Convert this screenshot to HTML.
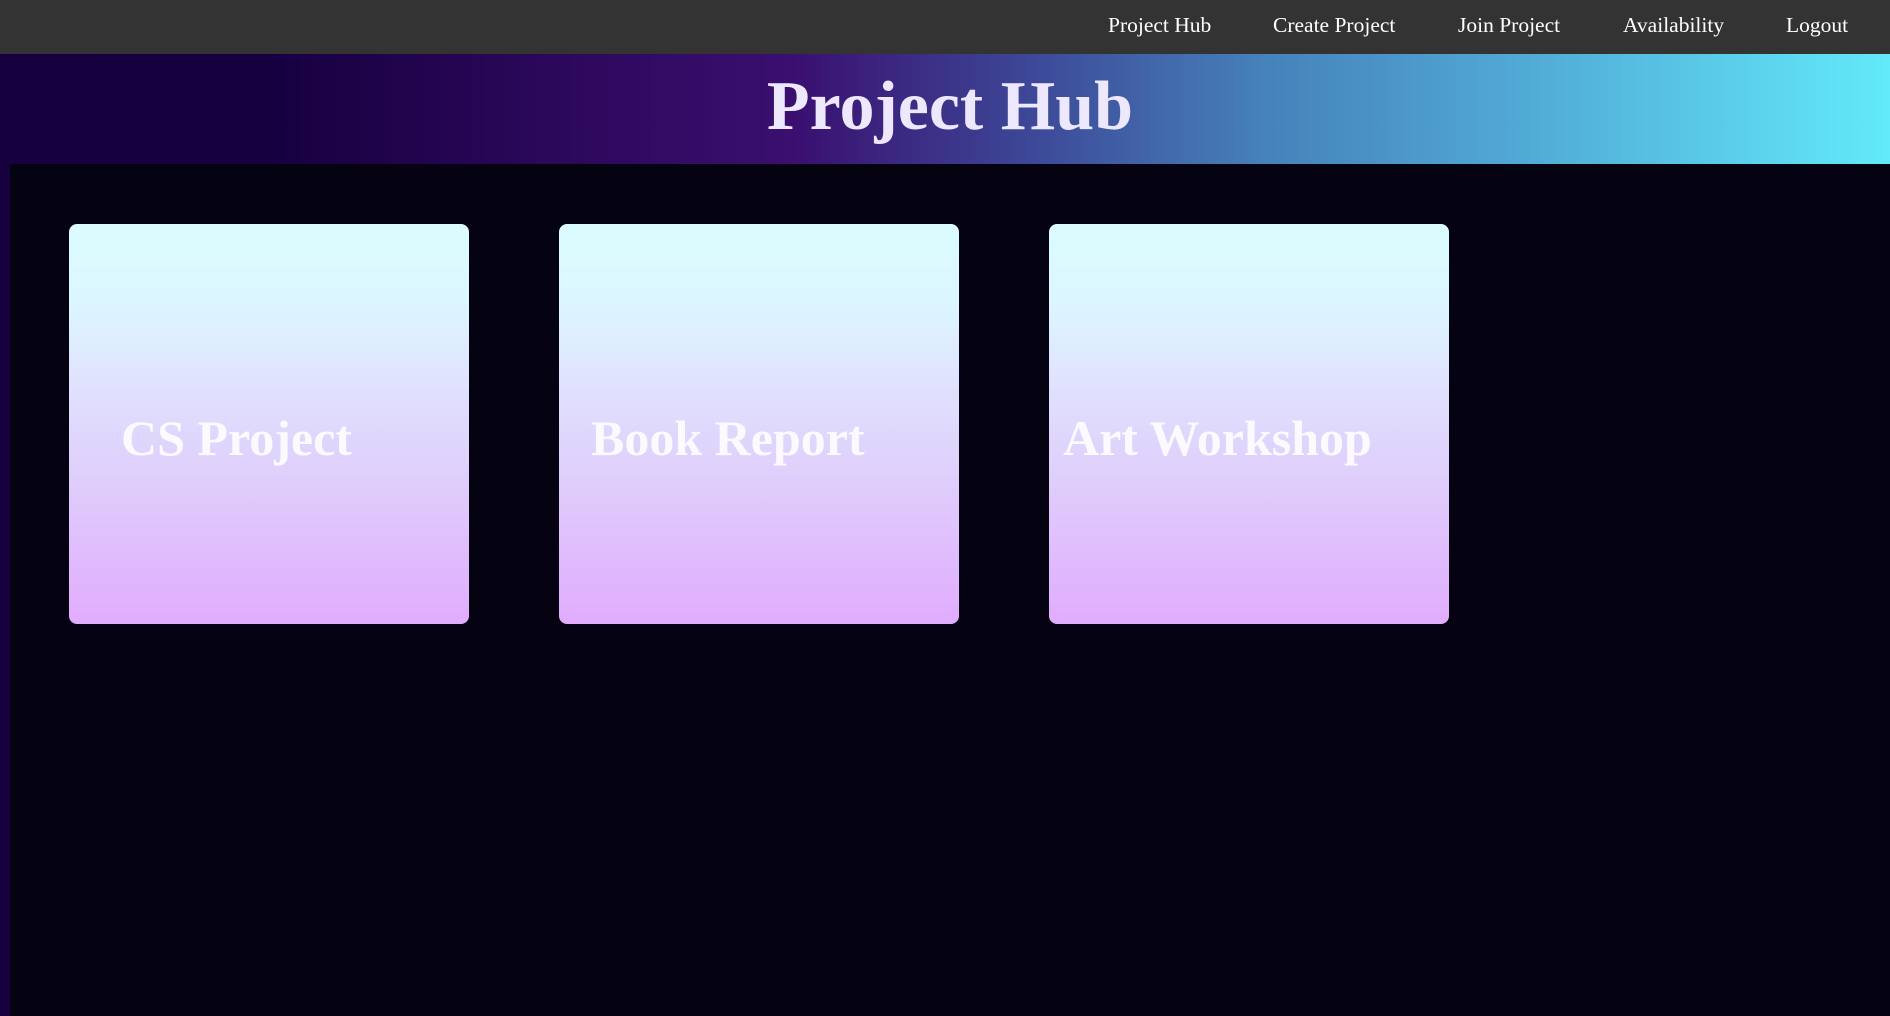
<!DOCTYPE html>
<html><head><meta charset="utf-8"><style>
html,body{margin:0;padding:0;width:1890px;height:1016px;overflow:hidden;background:#16003f;font-family:"Liberation Serif",serif;}
.nav{position:absolute;left:0;top:0;width:1890px;height:54px;background:#333;}
.nav span{position:absolute;top:13px;color:#fff;font-size:21.5px;white-space:nowrap;}
.hdr{position:absolute;left:0;top:54px;width:1890px;height:110px;background:linear-gradient(90deg,#17003e 0%,#160040 14%,#2a0758 28%,#3a0f70 42%,#3d4a99 55%,#4682bb 67%,#52aed8 82%,#62eafa 100%);}
.hdr h1{margin:0;position:absolute;left:0;width:1900px;text-align:center;top:13px;font-size:70px;font-weight:bold;color:#eee8ff;line-height:80px;}
.main{position:absolute;left:10px;top:164px;width:1880px;height:852px;background:#050311;}
.card{position:absolute;top:224px;width:400px;height:400px;border-radius:8px;background:linear-gradient(180deg,#dbfcff 0%,#dcf6ff 20%,#e0e2fe 40%,#dfcdfb 65%,#e1acfd 100%);}
.card span{position:absolute;top:185px;font-size:50px;font-weight:bold;color:#fcfaff;white-space:nowrap;}
</style></head><body>
<div class="nav">
<span style="left:1108px">Project Hub</span>
<span style="left:1273px">Create Project</span>
<span style="left:1458px">Join Project</span>
<span style="left:1623px">Availability</span>
<span style="left:1786px">Logout</span>
</div>
<div class="hdr"><h1>Project Hub</h1></div>
<div class="main"></div>
<div class="card" style="left:69px"><span style="left:52px">CS Project</span></div>
<div class="card" style="left:559px"><span style="left:32px">Book Report</span></div>
<div class="card" style="left:1049px"><span style="left:14px">Art Workshop</span></div>
</body></html>
